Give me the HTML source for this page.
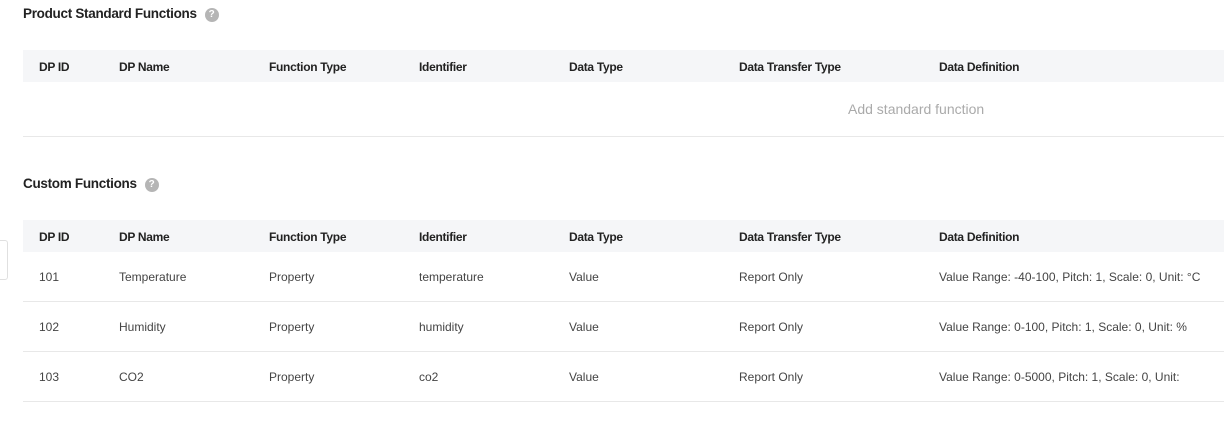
<!DOCTYPE html>
<html><head><style>
body{margin:0;width:1224px;height:426px;background:#fff;font-family:"Liberation Sans",Arial,sans-serif;color:#333;position:relative;overflow:hidden}
.t{position:absolute;left:23px;font-size:13.5px;font-weight:bold;color:#222;letter-spacing:-0.3px}
.q{display:inline-block;width:14px;height:14px;border-radius:50%;background:#b5b5b5;color:#fff;font-size:10px;text-align:center;line-height:14px;margin-left:8px;vertical-align:1px;letter-spacing:0}
.hd{position:absolute;left:23px;width:1201px;height:32px;background:#f5f6f8}
.r{position:absolute;left:23px;width:1201px;height:49px;border-bottom:1px solid #e8e8e8}
.c{position:absolute;font-size:12px;white-space:nowrap}
.hd .c{top:10px;font-weight:bold;color:#222;letter-spacing:-0.3px}
.r .c{top:18px;color:#444}
</style></head><body>
<div class="t" style="top:6px">Product Standard Functions<span class="q">?</span></div>
<div class="hd" style="top:50px">
<span class="c" style="left:16px">DP ID</span><span class="c" style="left:96px">DP Name</span><span class="c" style="left:246px">Function Type</span><span class="c" style="left:396px">Identifier</span><span class="c" style="left:546px">Data Type</span><span class="c" style="left:716px">Data Transfer Type</span><span class="c" style="left:916px">Data Definition</span></div>
<div class="r" style="top:82px;height:54px"><span class="c" style="left:825px;top:19px;font-size:14px;color:#aaa">Add standard function</span></div>
<div class="t" style="top:176px">Custom Functions<span class="q">?</span></div>
<div style="position:absolute;left:-4px;top:240px;width:10px;height:38px;border:1px solid #e0e0e0;border-radius:3px"></div>
<div class="hd" style="top:220px">
<span class="c" style="left:16px">DP ID</span><span class="c" style="left:96px">DP Name</span><span class="c" style="left:246px">Function Type</span><span class="c" style="left:396px">Identifier</span><span class="c" style="left:546px">Data Type</span><span class="c" style="left:716px">Data Transfer Type</span><span class="c" style="left:916px">Data Definition</span></div>
<div class="r" style="top:252px"><span class="c" style="left:16px">101</span><span class="c" style="left:96px">Temperature</span><span class="c" style="left:246px">Property</span><span class="c" style="left:396px">temperature</span><span class="c" style="left:546px">Value</span><span class="c" style="left:716px">Report Only</span><span class="c" style="left:916px">Value Range: -40-100, Pitch: 1, Scale: 0, Unit: °C</span></div>
<div class="r" style="top:302px"><span class="c" style="left:16px">102</span><span class="c" style="left:96px">Humidity</span><span class="c" style="left:246px">Property</span><span class="c" style="left:396px">humidity</span><span class="c" style="left:546px">Value</span><span class="c" style="left:716px">Report Only</span><span class="c" style="left:916px">Value Range: 0-100, Pitch: 1, Scale: 0, Unit: %</span></div>
<div class="r" style="top:352px"><span class="c" style="left:16px">103</span><span class="c" style="left:96px">CO2</span><span class="c" style="left:246px">Property</span><span class="c" style="left:396px">co2</span><span class="c" style="left:546px">Value</span><span class="c" style="left:716px">Report Only</span><span class="c" style="left:916px">Value Range: 0-5000, Pitch: 1, Scale: 0, Unit:</span></div>
</body></html>
